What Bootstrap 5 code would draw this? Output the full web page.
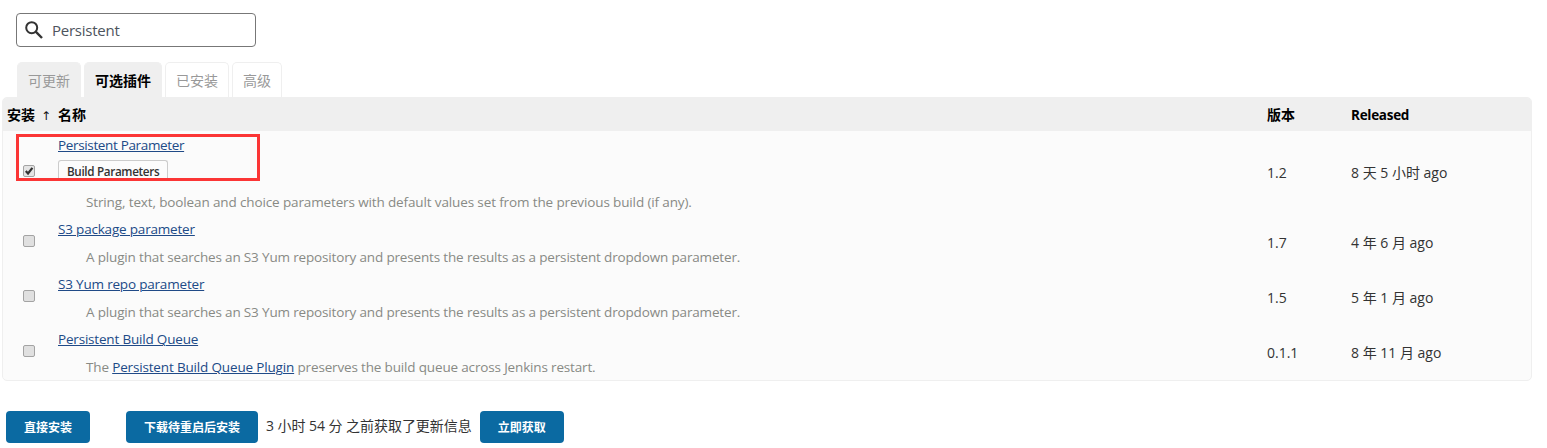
<!DOCTYPE html>
<html lang="zh-CN">
<head>
<meta charset="utf-8">
<meta name="viewport" content="width=device-width, initial-scale=1">
<title>插件管理</title>
<link href="https://cdn.jsdelivr.net/npm/bootstrap@5.3.0/dist/css/bootstrap.min.css" rel="stylesheet">
<style>
body{font:14px/20px "Open Sans","Noto Sans CJK SC",sans-serif;color:#333;background:#fff;overflow:hidden}
.page{padding:13px 15px 0 2px}
.search-box{width:240px;height:34px;margin-left:14px;border:1px solid #777;border-radius:4px;padding-left:8px;gap:9px}
.search-box input{font-size:15px;letter-spacing:-.25px;color:#4d545d;outline:0;padding:0;width:190px;height:30px}
.plugin-tabs{margin:15px 0 0 15px;gap:3px}
.plugin-tabs a{height:35px;line-height:35px;padding:0 10px;border:1px solid #efefef;border-bottom:0;border-radius:5px 5px 0 0;color:#999;text-decoration:none;white-space:nowrap}
.plugin-tabs a.shaded{background:#efefef}
.plugin-tabs a.current{background:#efefef;color:#000;font-weight:700}
.plugin-panel{border:1px solid #efefef;border-radius:5px;background:#fbfbfb;height:284px;overflow:hidden}
.plugin-table{table-layout:fixed;width:1528px;border-collapse:collapse}
.plugin-table th{height:33px;padding:0 4px;background:#efefef;color:#000;font-weight:700;line-height:20px;white-space:nowrap}
.plugin-table th:last-child{font-size:13.5px;letter-spacing:-.28px}
.plugin-table td{padding:0 4px;vertical-align:middle}
.plugin-table a{color:#204a87;text-decoration:underline;text-underline-offset:1px;text-decoration-thickness:1px}
.c-check{width:51px}.c-version{width:84px}.c-date{width:184px}
.arrow{display:inline-block;line-height:14px;font-weight:400;color:#111;margin-left:6px;font-family:"DejaVu Sans",sans-serif;font-size:12px}
.plugin-name{height:28px;line-height:28px;font-size:13.5px;letter-spacing:-.19px}
.plugin-name.tight{letter-spacing:-.35px}
.label-row{height:29px;padding-top:1px}
.label-chip{display:inline-block;height:21px;line-height:20px;padding:0 8px;border:1px solid #ccc;border-bottom:0;border-radius:3px 3px 0 0;background:#fcfcfc;color:#333;font-size:11.7px;letter-spacing:-.34px;font-weight:600;vertical-align:top}
.excerpt{height:27px;line-height:28px;padding-left:28px;color:#888a85;font-size:13.5px;letter-spacing:-.16px}
.excerpt.wide{letter-spacing:-.13px}
.excerpt.narrow{letter-spacing:-.16px}
.tick{display:block;width:12px;height:12px;margin:-4px 0 0 16px}
.highlight{left:14px;top:37px;width:244px;height:47px;border:3px solid #fb3535}
.action-bar{margin:30px 0 0 4px}
.update-note{letter-spacing:-.05px;line-height:18px;margin-top:-2px}
.btn-jk{height:32px;line-height:33px;padding:0 18px;border:0;border-radius:4px;background:#0b6aa2;color:#fff;font-size:12px;font-weight:700}
.btn-restart{margin-left:36px}
</style>
</head>
<body>
<main class="page">
  <div class="search-box d-flex align-items-center">
    <svg width="18" height="18" viewBox="0 0 18 18" fill="none" stroke="#333" stroke-width="2"><circle cx="6.7" cy="6.7" r="5.5"/><path d="M10.7 10.7 17 17" stroke-width="2.4"/></svg>
    <input class="border-0 bg-transparent" type="text" value="Persistent">
  </div>
  <nav class="plugin-tabs d-flex">
    <a class="shaded" href="#">可更新</a><a class="current" href="#">可选插件</a><a href="#">已安装</a><a href="#">高级</a>
  </nav>
  <div class="position-relative">
    <div class="plugin-panel">
      <table class="plugin-table">
        <colgroup><col class="c-check"><col><col class="c-version"><col class="c-date"></colgroup>
        <thead><tr><th>安装<span class="arrow">↑</span></th><th>名称</th><th>版本</th><th>Released</th></tr></thead>
        <tbody>
          <tr>
            <td><svg class="tick" viewBox="0 0 12 12"><rect x=".5" y=".5" width="11" height="11" rx="1.5" fill="#e4e4e4" stroke="#a3a3a3"/><path d="M2.8 6.1 5 8.5 9.4 2.8" fill="none" stroke="#333" stroke-width="2.2"/></svg></td>
            <td><div class="plugin-name tight"><a href="#">Persistent Parameter</a></div><div class="label-row"><span class="label-chip">Build Parameters</span></div><div class="excerpt wide">String, text, boolean and choice parameters with default values set from the previous build (if any).</div></td>
            <td>1.2</td><td>8 天 5 小时 ago</td>
          </tr>
          <tr>
            <td><svg class="tick" viewBox="0 0 12 12"><rect x=".5" y=".5" width="11" height="11" rx="1.5" fill="#e0e0e0" stroke="#a3a3a3"/></svg></td>
            <td><div class="plugin-name"><a href="#">S3 package parameter</a></div><div class="excerpt">A plugin that searches an S3 Yum repository and presents the results as a persistent dropdown parameter.</div></td>
            <td>1.7</td><td>4 年 6 月 ago</td>
          </tr>
          <tr>
            <td><svg class="tick" viewBox="0 0 12 12"><rect x=".5" y=".5" width="11" height="11" rx="1.5" fill="#e0e0e0" stroke="#a3a3a3"/></svg></td>
            <td><div class="plugin-name"><a href="#">S3 Yum repo parameter</a></div><div class="excerpt">A plugin that searches an S3 Yum repository and presents the results as a persistent dropdown parameter.</div></td>
            <td>1.5</td><td>5 年 1 月 ago</td>
          </tr>
          <tr>
            <td><svg class="tick" viewBox="0 0 12 12"><rect x=".5" y=".5" width="11" height="11" rx="1.5" fill="#e0e0e0" stroke="#a3a3a3"/></svg></td>
            <td><div class="plugin-name"><a href="#">Persistent Build Queue</a></div><div class="excerpt narrow">The <a href="#">Persistent Build Queue Plugin</a> preserves the build queue across Jenkins restart.</div></td>
            <td>0.1.1</td><td>8 年 11 月 ago</td>
          </tr>
        </tbody>
      </table>
    </div>
    <div class="highlight position-absolute"></div>
  </div>
  <div class="action-bar d-flex align-items-center">
    <button class="btn btn-jk" type="button">直接安装</button>
    <button class="btn btn-jk btn-restart" type="button">下载待重启后安装</button>
    <span class="mx-2 update-note">3 小时 54 分 之前获取了更新信息</span>
    <button class="btn btn-jk" type="button">立即获取</button>
  </div>
</main>
<script src="https://cdn.jsdelivr.net/npm/bootstrap@5.3.0/dist/js/bootstrap.bundle.min.js"></script>
</body>
</html>
